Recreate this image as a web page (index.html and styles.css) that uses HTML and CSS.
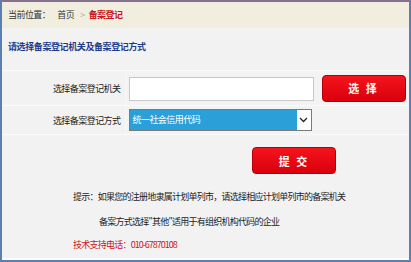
FILE: index.html
```html
<!DOCTYPE html>
<html lang="zh-CN">
<head>
  <meta charset="UTF-8">
  <title>备案登记</title>
  <link rel="stylesheet" href="styles.css">
</head>
<body>
  <div class="frame">
    <div class="crumb">当前位置：<span class="home">首页</span><span class="sep">&gt;</span><span class="here">备案登记</span></div>

    <div class="main">
      <div class="title">请选择备案登记机关及备案登记方式</div>

      <table class="form-table">
        <tr class="row-one">
          <td class="label">选择备案登记机关</td>
          <td class="field">
            <div class="field-line">
              <input type="text" class="text-input">
              <button class="red-btn pick-btn">选 择</button>
            </div>
          </td>
        </tr>
        <tr class="row-two">
          <td class="label">选择备案登记方式</td>
          <td class="field">
            <div class="select-box">
              <span class="select-value">统一社会信用代码</span>
              <span class="select-arrow">
                <svg width="9" height="6" viewBox="0 0 9 6"><path d="M1 1 L4.5 4.5 L8 1" fill="none" stroke="#222" stroke-width="1.3"/></svg>
              </span>
            </div>
          </td>
        </tr>
      </table>

      <div class="submit-row">
        <button class="red-btn submit-btn">提 交</button>
      </div>

      <div class="hints">
        <p class="first">提示：如果您的注册地隶属计划单列市，请选择相应计划单列市的备案机关</p>
        <p class="indent">备案方式选择"其他"适用于有组织机构代码的企业</p>
        <p class="phone">技术支持电话：<span class="num">010-67870108</span></p>
      </div>
    </div>
  </div>
</body>
</html>
```

FILE: styles.css
```css
* { box-sizing: border-box; }
body { margin: 0; font-family: "Noto Sans CJK SC", "Liberation Sans", sans-serif; font-size: 9px; letter-spacing: -0.55px; color: #222; background: #fff; }
.frame { width: 411px; height: 262px; border-left: 2px solid #5b7fae; border-right: 2px solid #5b7fae; border-bottom: 2px solid #5b7fae; border-top: 2px solid #86708f; background: #f2f2f2; }
.crumb { height: 26px; line-height: 26px; padding-left: 6px; background: #f2eedf; color: #333; }
.crumb .home { margin-left: 7px; }
.crumb .sep { color: #aaa; margin: 0 4px 0 6px; }
.crumb .here { color: #c8161d; font-weight: bold; }
.main { height: 232px; border-bottom: 2px solid #fff; }
.title { padding: 13px 0 0 6px; height: 42px; color: #1e3c8c; font-weight: bold; line-height: 12px; letter-spacing: -0.4px; }
.form-table { width: 100%; border-collapse: collapse; }
.form-table td { border-top: 1px solid #fbfbfb; border-bottom: 1px solid #fbfbfb; padding: 0; }
.form-table .label { width: 123px; text-align: right; padding-right: 4px; border-right: 1px solid #f7f7f7; }
.form-table .field { padding-left: 3px; background: #f3f3f3; }
.row-one td { height: 35px; }
.row-two td { height: 29px; }
.field-line { display: flex; align-items: center; gap: 8px; }
.text-input { width: 185px; height: 24px; border: 1px solid #c8c8c8; background: #fff; margin-top: 2px; }
.red-btn { border: 1px solid #b4000a; border-radius: 4px; background: linear-gradient(#f5141c, #d8000c); color: #fff; font-family: inherit; font-size: 11px; font-weight: bold; letter-spacing: 2px; cursor: pointer; }
.pick-btn { width: 84px; height: 27px; }
.select-box { display: flex; width: 183px; height: 22px; border: 1px solid #7a7a7a; background: #2a9fd8; }
.select-value { flex: 1; color: #fff; line-height: 20px; padding-left: 3px; }
.select-arrow { width: 14px; background: #fff; display: flex; align-items: center; justify-content: center; }
.submit-row { padding: 12px 0 0 250px; height: 56px; }
.submit-btn { width: 84px; height: 27px; }
.hints { padding-left: 71px; letter-spacing: -0.75px; }
.hints p { margin: 0; line-height: 12px; }
.hints .first { height: 25px; }
.hints .indent { padding-left: 26px; height: 23px; }
.hints .phone { color: #c8161d; }
.hints .num { letter-spacing: -1px; }
```
